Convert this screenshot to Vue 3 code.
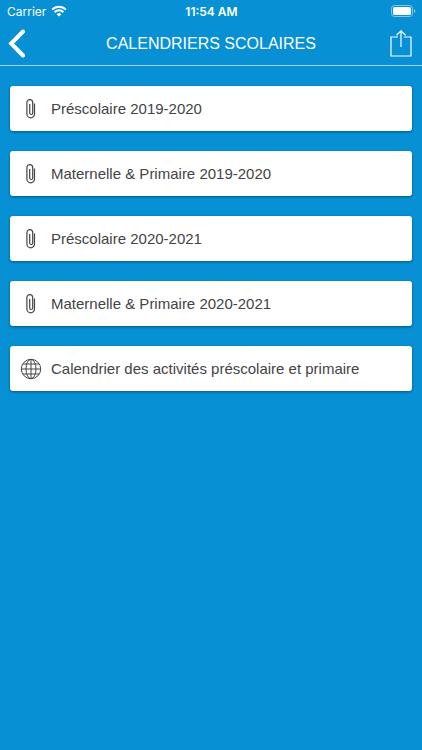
<template>
  <div class="screen">
    <header class="header">
      <div class="status-bar">
        <div class="carrier">
          <span>Carrier</span>
          <svg class="wifi" viewBox="0 0 16 12" aria-hidden="true">
            <path d="M1.2 4.6a9.6 9.6 0 0 1 13.6 0" />
            <path d="M3.6 7.2a6.2 6.2 0 0 1 8.8 0" />
            <path class="wifi-dot" d="M8 11.6L5.6 9.2a3.4 3.4 0 0 1 4.8 0z" />
          </svg>
        </div>
        <span class="time">11:54 AM</span>
        <svg class="battery" viewBox="0 0 25 12" aria-hidden="true">
          <rect class="battery-case" x="0.5" y="0.5" width="21" height="11" rx="3" />
          <rect class="battery-level" x="2" y="2" width="18" height="8" rx="1.6" />
          <path class="battery-tip" d="M23 4v4c.8-.3 1.3-1.1 1.3-2s-.5-1.7-1.3-2z" />
        </svg>
      </div>

      <div class="nav-bar">
        <button class="nav-btn" type="button" aria-label="Retour">
          <svg class="back-icon" viewBox="0 0 18 30" aria-hidden="true">
            <path d="M15 2.5L3.2 14.5 15 26.500" />
          </svg>
        </button>
        <h1 class="title">CALENDRIERS SCOLAIRES</h1>
        <button class="nav-btn right" type="button" aria-label="Partager">
          <svg class="share-icon" viewBox="0 0 22 28" aria-hidden="true">
            <path d="M8 7H1v19h20V7h-7" />
            <path d="M11 17V1M6.500 5.200L11 .8l4.500 4.400" />
          </svg>
        </button>
      </div>
    </header>

    <main>
      <ul class="list">
        <li v-for="item in items" :key="item.label">
          <a class="card" href="#">
            <svg v-if="item.type === 'file'" class="icon" viewBox="0 0 22 22" aria-hidden="true">
              <path d="M14.5 5.5V16a3.800 3.800 0 0 1-7.600 0V4.500a2.900 2.900 0 0 1 5.800 0V15a1.500 1.500 0 0 1-3 0V6" />
            </svg>
            <svg v-else class="icon thin" viewBox="0 0 22 22" aria-hidden="true">
              <circle cx="11" cy="11" r="9.7" />
              <ellipse cx="11" cy="11" rx="5" ry="9.7" />
              <path d="M11 1.3v19.4M1.3 11h19.4M2.8 6h16.4M2.8 16h16.4" />
            </svg>
            <span>{{ item.label }}</span>
          </a>
        </li>
      </ul>
    </main>
  </div>
</template>

<script setup>
const items = [
  { type: 'file', label: 'Préscolaire 2019-2020' },
  { type: 'file', label: 'Maternelle & Primaire 2019-2020' },
  { type: 'file', label: 'Préscolaire 2020-2021' },
  { type: 'file', label: 'Maternelle & Primaire 2020-2021' },
  { type: 'web', label: 'Calendrier des activités préscolaire et primaire' }
]
</script>

<style>
body {
  background: #0791d4;
}
</style>

<style scoped>
.screen {
  min-height: 100vh;
  background: #0791d4;
  font-family: "Liberation Sans", Arial, sans-serif;
}

svg {
  display: block;
  fill: none;
}

.header {
  color: #fff;
  border-bottom: 1px solid #9fd3ee;
}

/* Status bar */
.status-bar {
  display: grid;
  grid-template-columns: 1fr auto 1fr;
  align-items: center;
  height: 22px;
  padding: 0 6px 0 7px;
  font-family: Inter, "Liberation Sans", sans-serif;
  font-size: 12px;
}

.carrier {
  display: flex;
  align-items: center;
  gap: 5px;
}

.wifi {
  width: 16px;
  height: 12px;
  stroke: #fff;
  stroke-width: 2;
}

.wifi-dot {
  fill: #fff;
  stroke: none;
}

.time {
  font-weight: 600;
}

.battery {
  justify-self: end;
  width: 25px;
  height: 12px;
}

.battery-case {
  stroke: #83c8e9;
}

.battery-level {
  fill: #fff;
}

.battery-tip {
  fill: #83c8e9;
}

/* Navigation bar */
.nav-bar {
  display: grid;
  grid-template-columns: 44px 1fr 44px;
  align-items: center;
  height: 43px;
}

.nav-btn {
  display: flex;
  align-items: center;
  height: 43px;
  padding: 0 8px;
  border: none;
  background: none;
  cursor: pointer;
}

.nav-btn.right {
  justify-content: flex-end;
  padding: 0 10px;
}

.back-icon {
  width: 18px;
  height: 30px;
  stroke: #fff;
  stroke-width: 4;
  stroke-linecap: round;
}

.share-icon {
  width: 22px;
  height: 28px;
  stroke: #fff;
  stroke-width: 1.2;
}

.title {
  margin: 0;
  text-align: center;
  font-size: 16px;
  font-weight: 400;
}

/* List of calendars */
.list {
  display: flex;
  flex-direction: column;
  gap: 20px;
  margin: 0;
  padding: 20px 10px;
  list-style: none;
}

.card {
  display: flex;
  align-items: center;
  gap: 9px;
  min-height: 45px;
  padding: 0 10px;
  box-sizing: border-box;
  border-radius: 3px;
  background: #fff;
  box-shadow: 0 1px 3px rgba(0, 0, 0, 0.4);
  color: #444;
  font-size: 15px;
  text-decoration: none;
}

.icon {
  flex: none;
  width: 22px;
  height: 22px;
  stroke: #444;
  stroke-width: 1.2;
}

.icon.thin {
  stroke-width: 1;
}
</style>
